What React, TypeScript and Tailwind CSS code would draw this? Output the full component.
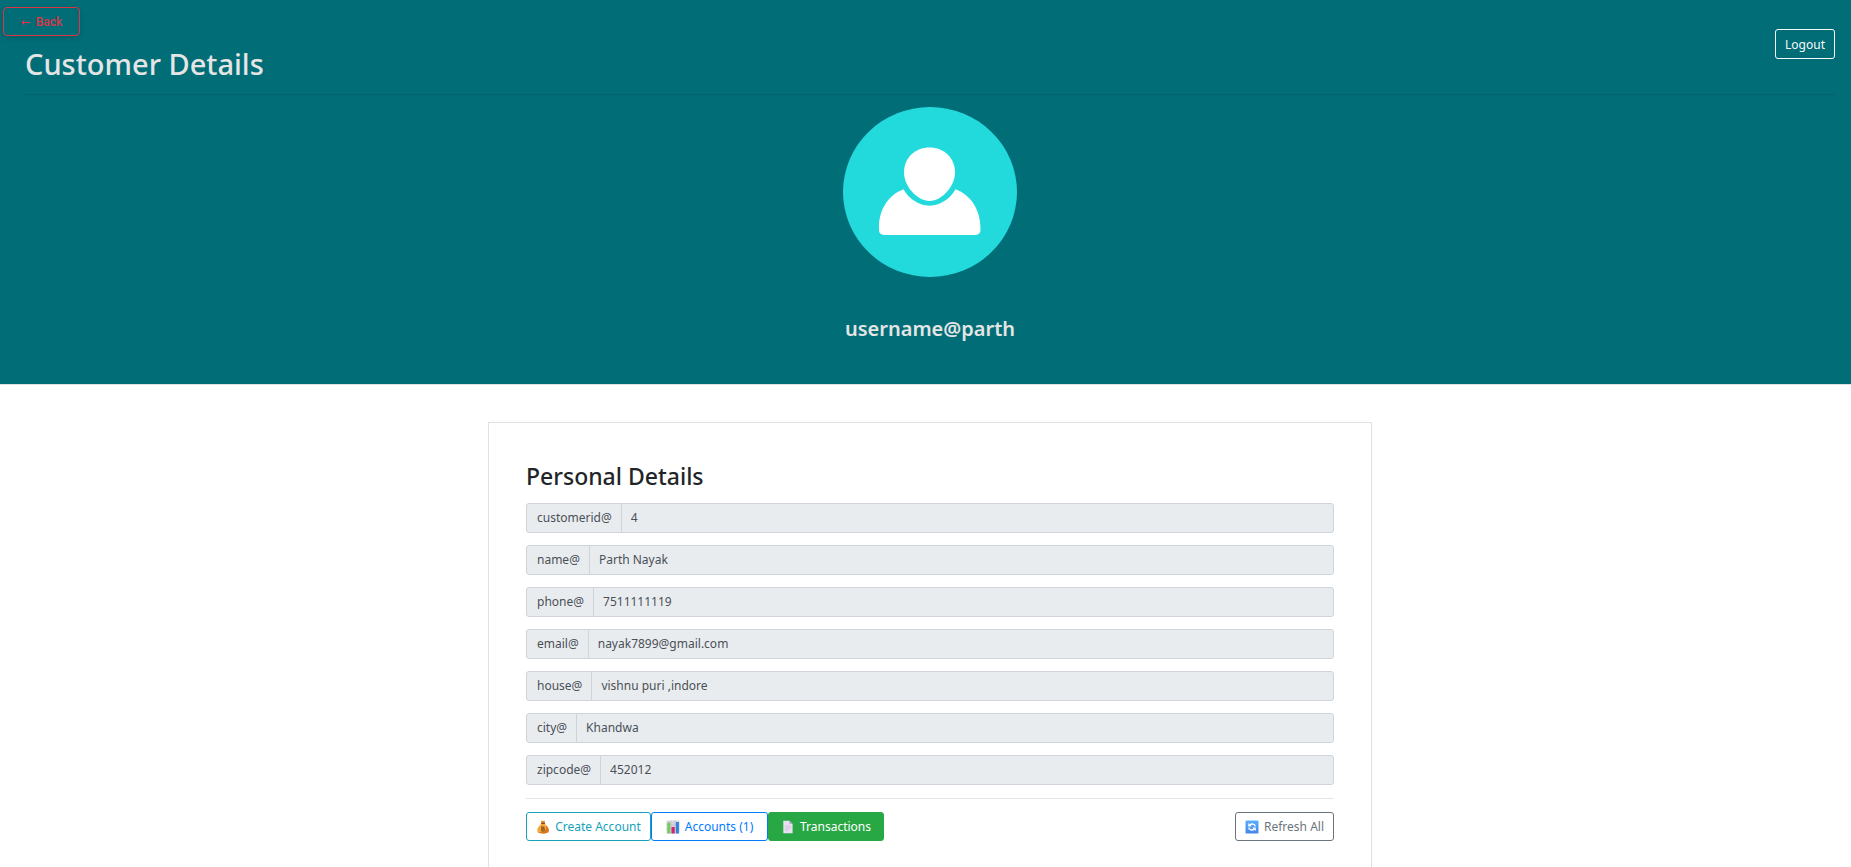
import React from "react";

type Field = { label: string; value: string };

const fields: Field[] = [
  { label: "customerid", value: "4" },
  { label: "name", value: "Parth Nayak" },
  { label: "phone", value: "7511111119" },
  { label: "email", value: "nayak7899@gmail.com" },
  { label: "house", value: "vishnu puri ,indore" },
  { label: "city", value: "Khandwa" },
  { label: "zipcode", value: "452012" },
];

function Avatar() {
  return (
    <svg viewBox="0 0 174 170" className="h-[170px] w-[174px]" aria-hidden="true">
      <ellipse cx="87" cy="85" rx="87" ry="85" fill="#22d9dc" />
      <g fill="#fff">
        <path d="M86.500 40.500C101 40.500 112 51 112 65.500C112 79 99 94 86.500 94C74 94 61 79 61 65.500C61 51 72 40.500 86.500 40.500Z" />
        <path d="M60.500 82.300C66 92 76 98.700 86.500 98.700C97 98.700 107 92 112.500 82.300C128 88 137.500 103 137.500 121.500V123C137.500 126.500 135.500 128 131 128H42.500C38 128 36 126.500 36 123V120C36 102.500 45.500 88 60.500 82.300Z" />
      </g>
    </svg>
  );
}

function MoneyBagIcon() {
  return (
    <svg viewBox="0 0 14 14" className="size-[14px]" aria-hidden="true">
      <path d="M5 .6 6.200 1.200 7 .5 7.900 1.200 9.100.6 8.500 3.300H5.600Z" fill="#e0861c" />
      <path d="M5.500 3H8.600C9 5 12.800 6.800 12.800 10.300C12.800 12.600 11 13.500 7 13.500S1.300 12.600 1.300 10.300C1.300 6.800 5.200 5 5.500 3Z" fill="#f5a838" />
      <path d="M10 5.600C12 7 12.800 8.600 12.800 10.300C12.800 12.600 11 13.500 7 13.500C4.500 13.500 2.600 13.100 1.800 12.100C6 13 11.500 11.500 10 5.600Z" fill="#d9771f" />
      <rect x="5" y="2.800" width="4.100" height="1.200" rx=".6" fill="#8a4a1d" />
      <path d="M5.800 6.900V11M5.600 7H7.400C8.600 7 8.600 8.900 7.400 8.900H5.900M7.400 8.900C8.900 8.900 8.900 11 7.400 11H5.600" fill="none" stroke="#5d3416" strokeWidth=".8" />
    </svg>
  );
}

function ChartIcon() {
  return (
    <svg viewBox="0 0 14 14" className="size-[14px]" aria-hidden="true">
      <rect x=".5" y=".5" width="13" height="13" rx="1" fill="#d9d3e3" />
      <path d="M.5 5H13.500M.5 9H13.500M5 .5V13.500M9 .5V13.500" stroke="#bdb5cc" strokeWidth=".6" />
      <rect x="1.300" y="2.500" width="3" height="11" fill="#6fcf57" />
      <rect x="5.500" y="7" width="3.200" height="6.500" fill="#d6246e" />
      <rect x="9.900" y="2" width="3" height="11.500" fill="#2b86dc" />
    </svg>
  );
}

function DocumentIcon() {
  return (
    <svg viewBox="0 0 14 14" className="size-[14px]" aria-hidden="true">
      <path d="M2.300.8H8.300L11.600 4.100V13.300H2.300Z" fill="#e8e0f0" />
      <path d="M8.300.8V4.100H11.600Z" fill="#b9a9cd" />
      <path d="M4 6H9.800M4 8H9.800M4 10H7.800" stroke="#cfc4de" strokeWidth="1" />
    </svg>
  );
}

function RefreshIcon() {
  return (
    <svg viewBox="0 0 14 14" className="size-[14px]" aria-hidden="true">
      <defs>
        <linearGradient id="refresh-fill" x1="0" y1="0" x2="0" y2="1">
          <stop offset="0" stopColor="#5aaefa" />
          <stop offset="1" stopColor="#4686e8" />
        </linearGradient>
      </defs>
      <rect x=".5" y=".5" width="13" height="13" rx="1.200" fill="url(#refresh-fill)" />
      <path d="M10.300 6.300C10 3.900 6.500 3.300 4.800 5M3.700 7.700C4 10.100 7.500 10.700 9.200 9" fill="none" stroke="#fff" strokeWidth="1.400" />
      <path d="M3.200 3V6.500H6.800ZM10.800 11V7.500H7.200Z" fill="#fff" />
    </svg>
  );
}

const actionClass = "flex h-[29px] items-center justify-center gap-[5px] rounded-[3px] border";

export default function App() {
  return (
    <div className="flex min-h-screen flex-col bg-white font-['Noto_Sans','Open_Sans',sans-serif] text-[12px] leading-5 text-[#212529]">
      <header className="relative h-[385px] shrink-0 border-b border-[#dee2e6] bg-[#006d77] pr-4 pl-[25px]">
        <button
          type="button"
          className="absolute top-[7px] left-[3px] flex h-[29px] w-[77px] items-center justify-center gap-[5px] rounded-[4px] border border-[#dc3545] font-['Roboto',sans-serif] font-medium text-[#dc3545] shadow-[0_2px_5px_rgba(0,0,0,0.15)]"
        >
          <span className="font-['DejaVu_Sans',sans-serif]">←</span>
          <span>Back</span>
        </button>
        <div className="flex items-start justify-between border-b border-[#02606a] pt-[29px]">
          <h1 className="pt-[15px] pb-[10px] text-[29px] leading-10 font-medium text-[#e5e5e5]">Customer Details</h1>
          <button type="button" className="h-[30px] rounded-[3px] border border-[#f8f9fa] px-[9px] pt-px text-[#f8f9fa]">
            Logout
          </button>
        </div>
        <div className="flex flex-col items-center pt-3">
          <Avatar />
          <h2 className="pt-9 text-[20px] leading-8 font-semibold text-[#e5e5e5]">username@parth</h2>
        </div>
      </header>

      <div className="flex grow flex-col pt-[37px] pr-4 pl-[25px]">
        <main className="mx-auto flex w-[884px] max-w-full grow flex-col border border-b-0 border-[#dee2e6] px-[37px] pt-[35px]">
          <h2 className="text-[23px] leading-9 font-medium">Personal Details</h2>
          <div className="mt-[9px] flex flex-col gap-3">
            {fields.map(({ label, value }) => (
              <div key={label} className="flex h-[30px] text-[#495057]">
                <label
                  htmlFor={label}
                  className="flex items-center rounded-l-[3px] border border-[#ced4da] bg-[#e9ecef] pr-[9px] pl-[10px]"
                >
                  {label}@
                </label>
                <input
                  id={label}
                  type="text"
                  readOnly
                  defaultValue={value}
                  className="-ml-px min-w-0 grow rounded-r-[3px] border border-[#ced4da] bg-[#e9ecef] px-[9px] outline-none"
                />
              </div>
            ))}
          </div>
          <hr className="mt-[13px] border-[#e5e5e5]" />
          <div className="mt-[13px] flex items-start justify-between">
            <div className="flex">
              <button type="button" className={`${actionClass} w-[125px] border-[#17a2b8] text-[#17a2b8]`}>
                <MoneyBagIcon />
                Create Account
              </button>
              <button type="button" className={`${actionClass} w-[117px] border-[#007bff] text-[#007bff]`}>
                <ChartIcon />
                Accounts (1)
              </button>
              <button type="button" className={`${actionClass} w-[116px] border-[#28a745] bg-[#28a745] text-white`}>
                <DocumentIcon />
                Transactions
              </button>
            </div>
            <button type="button" className={`${actionClass} w-[99px] border-[#6c757d] text-[#6c757d]`}>
              <RefreshIcon />
              Refresh All
            </button>
          </div>
        </main>
      </div>
    </div>
  );
}
